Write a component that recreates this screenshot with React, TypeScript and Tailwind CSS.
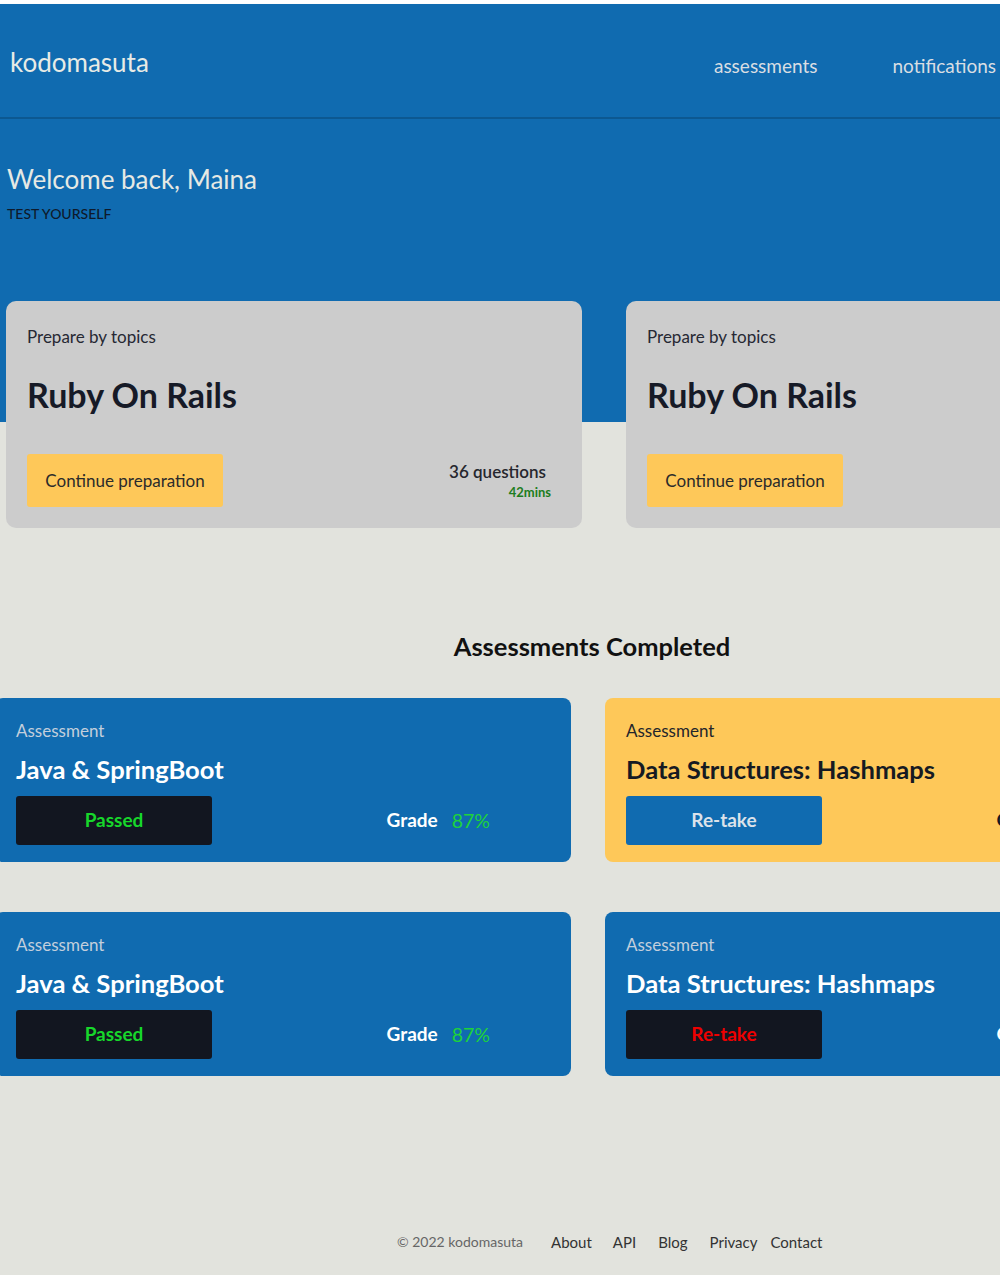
import React from 'react';

interface Assessment {
  title: string;
  variant: 'blue' | 'yellow';
  action: 'passed' | 'retake';
  actionStyle: 'dark' | 'blue';
}

const assessments: Assessment[] = [
  { title: 'Java & SpringBoot', variant: 'blue', action: 'passed', actionStyle: 'dark' },
  { title: 'Data Structures: Hashmaps', variant: 'yellow', action: 'retake', actionStyle: 'blue' },
  { title: 'Java & SpringBoot', variant: 'blue', action: 'passed', actionStyle: 'dark' },
  { title: 'Data Structures: Hashmaps', variant: 'blue', action: 'retake', actionStyle: 'dark' },
];

const TopicCard: React.FC = () => (
  <div className="flex h-[227px] w-[576px] shrink-0 flex-col rounded-[10px] bg-[#cccccc] pl-[21px] pr-[31px] pt-[26px]">
    <p className="text-[17px] leading-[20px] text-[#262833]">Prepare by topics</p>
    <h2 className="mt-[28px] text-[34px] font-bold leading-[40px] text-[#161a27]">Ruby On Rails</h2>
    <div className="mt-[39px] flex items-center justify-between">
      <button className="h-[53px] w-[196px] rounded-[3px] bg-[#fec859] text-[17px] text-[#2b2b2b]">
        Continue preparation
      </button>
      <div className="flex flex-col items-end">
        <span className="mr-[5px] text-[17px] font-semibold leading-[20px] text-[#26272e]">36 questions</span>
        <span className="mt-[2px] text-[13px] font-bold leading-[16px] text-[#1d7d20]">42mins</span>
      </div>
    </div>
  </div>
);

const AssessmentCard: React.FC<{ item: Assessment }> = ({ item }) => {
  const yellow = item.variant === 'yellow';
  return (
    <div
      className={`flex h-[164px] w-[576px] shrink-0 flex-col rounded-[8px] pl-[21px] pt-[23px] ${
        yellow ? 'bg-[#fec859]' : 'bg-[#106bb0]'
      }`}
    >
      <p className={`text-[17px] leading-[20px] ${yellow ? 'text-[#23252b]' : 'text-[#c3cfdc]'}`}>Assessment</p>
      <h3 className={`mt-[13px] text-[25.6px] font-bold leading-[30px] ${yellow ? 'text-[#161a22]' : 'text-white'}`}>
        {item.title}
      </h3>
      <div className="mt-[12px] flex items-center justify-between pr-[81px]">
        <button
          className={`h-[49px] w-[196px] rounded-[3px] text-[19px] font-bold ${
            item.actionStyle === 'blue' ? 'bg-[#106bb0] text-[#dbe2ea]' : 'bg-[#121620]'
          } ${item.action === 'passed' ? 'text-[#17d72b]' : item.actionStyle === 'dark' ? 'text-[#ee0000]' : ''}`}
        >
          {item.action === 'passed' ? 'Passed' : 'Re-take'}
        </button>
        <div className={`flex items-center gap-[14px] text-[19px] font-bold ${yellow ? 'text-[#161a22]' : 'text-white'}`}>
          <span>Grade</span>
          <span className={`text-[19.5px] font-normal ${yellow ? 'text-[#161a22]' : 'text-[#1ed23b]'}`}>87%</span>
        </div>
      </div>
    </div>
  );
};

export default function App() {
  return (
    <div className="min-h-[1275px] w-full overflow-hidden bg-[#e2e3dd] font-['Lato',sans-serif]">
      <div className="h-1 bg-white" />

      {/* Top navigation */}
      <header className="flex h-[115px] items-center justify-between border-b-2 border-[#0c5891] bg-[#106bb0] pl-[10px] pr-[4px] pt-[4px] shadow-[0_1px_2px_rgba(0,0,0,0.15)]">
        <span className="text-[26px] text-[#e8ebe6]">kodomasuta</span>
        <nav className="mt-[8px] flex gap-[75px] text-[19px] text-[#d9dee3]">
          <a>assessments</a>
          <a>notifications</a>
        </nav>
      </header>

      {/* Hero */}
      <section className="h-[303px] bg-[#106bb0] px-[7px] pt-[44px]">
        <h1 className="text-[26px] leading-[32px] text-[#e6e9e4]">Welcome back, Maina</h1>
        <p className="mt-[11px] text-[14px] font-medium uppercase leading-[16px] text-[#0e1a2b]">Test yourself</p>
      </section>

      <div className="-mt-[121px] flex w-[1250px] gap-[44px] pl-[6px]">
        <TopicCard />
        <TopicCard />
      </div>

      <div className="w-[1184px]">
        <h2 className="mt-[102px] text-center text-[25.5px] font-bold leading-[32px] text-[#111111]">
          Assessments Completed
        </h2>
        <div className="-ml-[5px] mt-[36px] grid grid-cols-[576px_576px] gap-x-[34px] gap-y-[50px]">
          {assessments.map((a, i) => (
            <AssessmentCard key={i} item={a} />
          ))}
        </div>
      </div>

      <footer className="mt-[156px] flex h-[20px] items-center pl-[397px] text-[15px] leading-[20px] text-[#333333]">
        <span className="mr-[28px] text-[14px] text-[#666666]">© 2022 kodomasuta</span>
        <a className="mr-[21px]">About</a>
        <a className="mr-[22px]">API</a>
        <a className="mr-[22px]">Blog</a>
        <a className="mr-[13px]">Privacy</a>
        <a>Contact</a>
      </footer>
    </div>
  );
}
